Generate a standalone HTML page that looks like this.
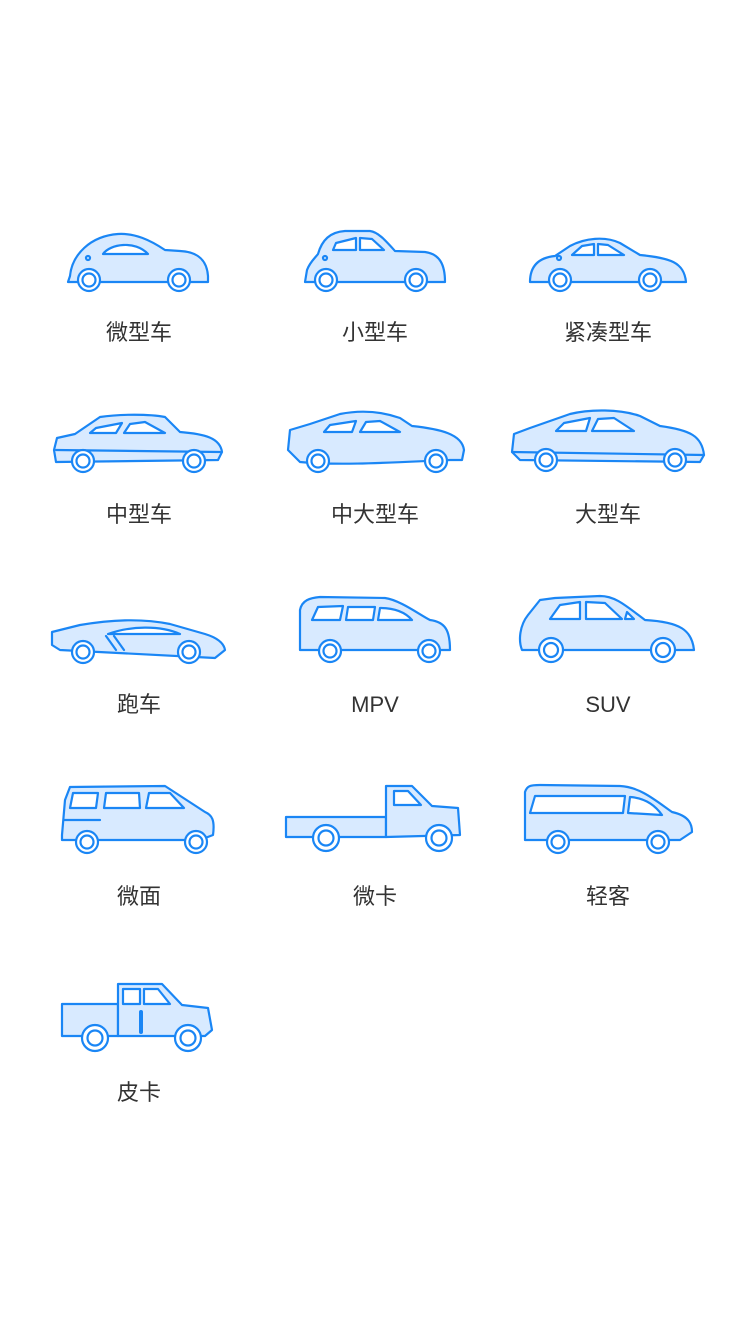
<!DOCTYPE html>
<html><head><meta charset="utf-8"><style>
html,body{margin:0;padding:0;background:#fff;width:750px;height:1334px;overflow:hidden;position:relative}
svg{position:absolute;left:0;top:0}
.l{position:absolute;width:200px;margin-left:-100px;text-align:center;font:22px "Liberation Sans","Noto Sans CJK SC",sans-serif;color:#333;line-height:30px}
</style></head><body>
<svg width="750" height="1334" viewBox="0 0 750 1334">
<g fill="#d8eaff" stroke="#1a86f5" stroke-width="2.2" stroke-linejoin="round" stroke-linecap="round">
<!-- 微型车 -->
<path d="M68,282 L70,276 C72,255 90,236 118,234 C135,233 150,240 165,250 L180,251 C200,252 207,262 208,276 L208,282 Z"/>
<path d="M103,254 C110,244 135,240 148,254 Z" fill="#fff"/><circle cx="88" cy="258" r="2" fill="#fff"/>
<!-- 小型车 -->
<path d="M305,282 L307,270 C310,262 315,258 318,254 C322,240 330,232 345,231 L370,231 C378,232 385,240 395,251 L425,252 C440,254 445,265 445,282 Z"/>
<path d="M333,250 L336,243 L356,238 L356,250 Z M360,238 L372,239 L384,250 L360,250 Z" fill="#fff"/><circle cx="325" cy="258" r="2" fill="#fff"/>
<!-- 紧凑 -->
<path d="M530,282 C530,270 535,258 555,256 L570,246 C585,238 605,236 620,243 L640,255 C670,258 684,262 686,282 Z"/>
<path d="M572,255 L582,246 L594,244 L594,255 Z M598,244 L608,245 L624,255 L598,255 Z" fill="#fff"/><circle cx="559" cy="258" r="2" fill="#fff"/>
<!-- 中型车 -->
<path d="M56,462 L54,450 L57,438 L75,434 L100,417 C120,414 150,414 165,417 L180,432 C205,434 220,438 222,452 L218,460 Z"/>
<path d="M90,433 L96,428 L122,423 L116,433 Z M124,433 L130,424 L145,422 L165,433 Z" fill="#fff"/><path d="M56,450 L220,452" fill="none"/>
<!-- 中大型车 -->
<path d="M288,450 L290,430 L310,424 L340,414 C360,410 380,411 400,418 L412,426 C440,429 462,434 464,450 L462,460 L450,460 C400,462 340,466 300,462 Z"/>
<path d="M324,432 L330,425 L356,421 L352,432 Z M360,432 L366,422 L380,421 L400,432 Z" fill="#fff"/>
<!-- 大型车 -->
<path d="M512,452 L514,434 L530,428 L570,414 C590,409 620,409 640,416 L660,426 C690,430 702,436 704,455 L700,462 L520,460 Z"/>
<path d="M556,431 L564,423 L590,418 L586,431 Z M592,431 L598,419 L614,418 L634,431 Z" fill="#fff"/><path d="M512,452 L704,455" fill="none"/>
<!-- 跑车 -->
<path d="M52,632 L80,625 C110,620 140,618 170,624 L205,634 C218,638 224,644 225,650 L215,658 L60,650 L52,645 Z"/>
<path d="M108,634 C130,626 160,625 180,634 Z" fill="#fff"/><path d="M106,636 L116,650 M114,636 L124,650" fill="none"/>
<!-- MPV -->
<path d="M300,650 L300,610 C302,600 310,598 320,597 L385,598 C400,600 420,615 430,620 C445,622 450,630 450,650 Z"/>
<path d="M312,620 L318,607 L343,606 L340,620 Z M346,620 L348,607 L375,607 L373,620 Z M378,620 L380,608 C395,608 405,612 412,620 Z" fill="#fff"/>
<!-- SUV -->
<path d="M522,650 C518,640 520,625 528,615 L540,600 L555,598 L600,596 C615,596 625,605 645,620 C680,622 692,630 694,650 Z"/>
<path d="M550,619 L560,605 L580,602 L580,619 Z M586,602 L605,603 L622,619 L586,619 Z M625,619 L627,612 L634,619 Z" fill="#fff"/>
<!-- 微面 -->
<path d="M62,835 L65,800 L70,787 L165,786 L205,812 C212,815 215,820 213,835 L200,840 L62,840 Z"/>
<path d="M70,808 L73,793 L98,793 L96,808 Z M104,808 L106,793 L139,793 L140,808 Z M146,808 L149,793 L170,793 L184,808 Z" fill="#fff"/><path d="M64,820 L100,820" fill="none"/>
<!-- 微卡 -->
<path d="M286,817 L386,817 L386,837 L286,837 Z"/>
<path d="M386,837 L386,786 L412,786 L432,806 L458,808 L460,835 L386,837 Z"/>
<path d="M394,805 L394,791 L408,791 L421,805 Z" fill="#fff"/>
<!-- 轻客 -->
<path d="M525,835 L525,792 C527,786 530,785 540,785 L620,786 C640,787 655,800 672,812 C690,816 692,825 692,832 L680,840 L525,840 Z"/>
<path d="M530,813 L535,796 L625,796 L623,813 Z M628,813 L630,797 C645,798 655,805 662,815 Z" fill="#fff"/>
<!-- 皮卡 -->
<path d="M62,1004 L118,1004 L118,1036 L62,1036 Z"/>
<path d="M118,1036 L118,984 L162,984 L182,1005 L208,1008 L212,1030 L205,1036 Z"/>
<path d="M123,1004 L123,989 L140,989 L140,1004 Z M144,1004 L144,989 L158,989 L170,1004 Z" fill="#fff"/>
<path d="M141,1012 L141,1032" stroke-width="4" fill="none"/>
</g>
<g fill="#fff" stroke="#1a86f5" stroke-width="2.2">
<circle cx="89" cy="280" r="11"/><circle cx="89" cy="280" r="6.5"/><circle cx="179" cy="280" r="11"/><circle cx="179" cy="280" r="6.5"/>
<circle cx="326" cy="280" r="11"/><circle cx="326" cy="280" r="6.5"/><circle cx="416" cy="280" r="11"/><circle cx="416" cy="280" r="6.5"/>
<circle cx="560" cy="280" r="11"/><circle cx="560" cy="280" r="6.5"/><circle cx="650" cy="280" r="11"/><circle cx="650" cy="280" r="6.5"/>
<circle cx="83" cy="461" r="11"/><circle cx="83" cy="461" r="6.5"/><circle cx="194" cy="461" r="11"/><circle cx="194" cy="461" r="6.5"/>
<circle cx="318" cy="461" r="11"/><circle cx="318" cy="461" r="6.5"/><circle cx="436" cy="461" r="11"/><circle cx="436" cy="461" r="6.5"/>
<circle cx="546" cy="460" r="11"/><circle cx="546" cy="460" r="6.5"/><circle cx="675" cy="460" r="11"/><circle cx="675" cy="460" r="6.5"/>
<circle cx="83" cy="652" r="11"/><circle cx="83" cy="652" r="6.5"/><circle cx="189" cy="652" r="11"/><circle cx="189" cy="652" r="6.5"/>
<circle cx="330" cy="651" r="11"/><circle cx="330" cy="651" r="6.5"/><circle cx="429" cy="651" r="11"/><circle cx="429" cy="651" r="6.5"/>
<circle cx="551" cy="650" r="12"/><circle cx="551" cy="650" r="7"/><circle cx="663" cy="650" r="12"/><circle cx="663" cy="650" r="7"/>
<circle cx="87" cy="842" r="11"/><circle cx="87" cy="842" r="6.5"/><circle cx="196" cy="842" r="11"/><circle cx="196" cy="842" r="6.5"/>
<circle cx="326" cy="838" r="13"/><circle cx="326" cy="838" r="7.5"/><circle cx="439" cy="838" r="13"/><circle cx="439" cy="838" r="7.5"/>
<circle cx="558" cy="842" r="11"/><circle cx="558" cy="842" r="6.5"/><circle cx="658" cy="842" r="11"/><circle cx="658" cy="842" r="6.5"/>
<circle cx="95" cy="1038" r="13"/><circle cx="95" cy="1038" r="7.5"/><circle cx="188" cy="1038" r="13"/><circle cx="188" cy="1038" r="7.5"/>
</g>
</svg>
<div class="l" style="left:139px;top:318px">微型车</div>
<div class="l" style="left:375px;top:318px">小型车</div>
<div class="l" style="left:608px;top:318px">紧凑型车</div>
<div class="l" style="left:139px;top:500px">中型车</div>
<div class="l" style="left:375px;top:500px">中大型车</div>
<div class="l" style="left:608px;top:500px">大型车</div>
<div class="l" style="left:139px;top:690px">跑车</div>
<div class="l" style="left:375px;top:690px">MPV</div>
<div class="l" style="left:608px;top:690px">SUV</div>
<div class="l" style="left:139px;top:882px">微面</div>
<div class="l" style="left:375px;top:882px">微卡</div>
<div class="l" style="left:608px;top:882px">轻客</div>
<div class="l" style="left:139px;top:1078px">皮卡</div>
</body></html>
